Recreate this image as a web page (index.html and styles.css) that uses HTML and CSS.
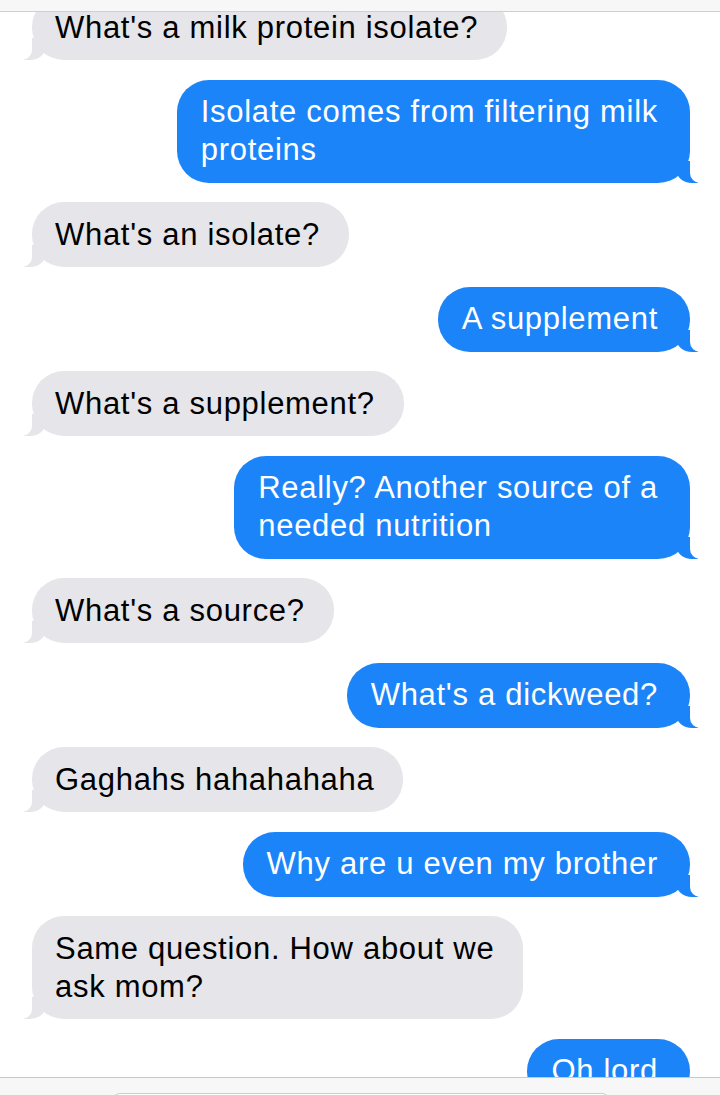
FILE: index.html
```html
<!DOCTYPE html>
<html>
<head>
<meta charset="utf-8">
<link rel="stylesheet" href="styles.css">
</head>
<body>
<div class="screen">
  <div class="topbar"></div>
  <div class="thread">
    <div class="msg them">What's a milk protein isolate?</div>
    <div class="msg me">Isolate comes from filtering milk<br>proteins</div>
    <div class="msg them">What's an isolate?</div>
    <div class="msg me">A supplement</div>
    <div class="msg them">What's a supplement?</div>
    <div class="msg me">Really? Another source of a<br>needed nutrition</div>
    <div class="msg them">What's a source?</div>
    <div class="msg me">What's a dickweed?</div>
    <div class="msg them">Gaghahs hahahahaha</div>
    <div class="msg me">Why are u even my brother</div>
    <div class="msg them">Same question. How about we<br>ask mom?</div>
    <div class="msg me">Oh lord</div>
  </div>
  <div class="bottombar"><div class="field"></div></div>
</div>
</body>
</html>
```

FILE: styles.css
```css
html, body {
  margin: 0;
  padding: 0;
  background: #ffffff;
}

.screen {
  position: relative;
  width: 720px;
  height: 1095px;
  overflow: hidden;
  background: #ffffff;
  font-family: "Liberation Sans", Arial, sans-serif;
}

.topbar {
  position: absolute;
  top: 0;
  left: 0;
  right: 0;
  height: 11px;
  background: #f7f7f7;
  border-bottom: 1px solid #cfcfd2;
  z-index: 5;
}

.thread {
  display: flex;
  flex-direction: column;
  gap: 19.5px;
  margin-top: -5px;
  padding: 0 30px 0 32px;
}

.msg {
  position: relative;
  font-size: 31px;
  letter-spacing: 0.7px;
  line-height: 38px;
  padding: 13.5px 29px 13.5px 23px;
  border-radius: 32px;
  white-space: nowrap;
}

.them {
  align-self: flex-start;
  background: #e5e5ea;
  color: #000000;
}

.me {
  align-self: flex-end;
  background: #1b84f9;
  color: #ffffff;
  padding: 13.5px 32px 13.5px 24px;
}

.msg::before,
.msg::after {
  content: "";
  position: absolute;
  bottom: 0;
  height: 22px;
}

.them::before {
  left: -8px;
  width: 22px;
  background: #e5e5ea;
  border-bottom-right-radius: 16px 14px;
}

.them::after {
  left: -12px;
  width: 12px;
  background: #ffffff;
  border-bottom-right-radius: 10px;
}

.me::before {
  right: -8px;
  width: 22px;
  background: #1b84f9;
  border-bottom-left-radius: 16px 14px;
}

.me::after {
  right: -12px;
  width: 12px;
  background: #ffffff;
  border-bottom-left-radius: 10px;
}

.bottombar {
  position: absolute;
  left: 0;
  right: 0;
  bottom: 0;
  height: 17px;
  background: #f7f7f7;
  border-top: 1px solid #c9c9cc;
  z-index: 5;
}

.field {
  margin: 15px 0 0 112px;
  width: 496px;
  height: 20px;
  background: #ffffff;
  border: 1px solid #cdcdd0;
  border-radius: 8px;
}
```
